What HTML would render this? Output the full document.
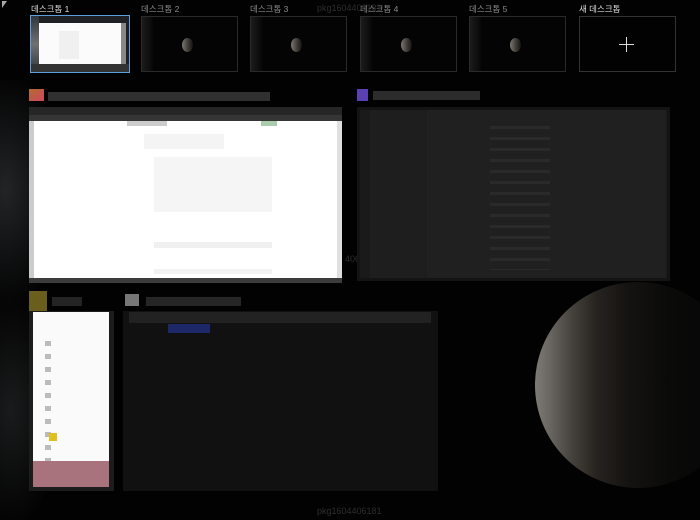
<!DOCTYPE html>
<html><head><meta charset="utf-8"><style>
*{margin:0;padding:0;box-sizing:border-box}
body{width:700px;height:520px;background:#020202;position:relative;overflow:hidden;font-family:"Liberation Sans","Noto Sans CJK KR",sans-serif}
.a{position:absolute}
.lbl{position:absolute;top:3px;font-size:8.5px;color:#8a8a8a}
.th{position:absolute;top:16px;width:97px;height:56px;border:1px solid #2a2a2a;background:#040404;overflow:hidden}
.th .e{position:absolute;left:0;top:0;width:12px;height:56px;background:linear-gradient(90deg,#1c1c1c,#0c0c0c 70%,#040404)}
.th .m{position:absolute;left:40px;top:21px;width:11px;height:14px;border-radius:50%;background:linear-gradient(90deg,#7a7672,#44403c 50%,#141210)}
.wm{position:absolute;font-size:9px;color:#2e2e2e}
.ttl{position:absolute;height:9px;background:#333}
</style></head><body>
<div class="a" style="left:0;top:80px;width:110px;height:440px;background:radial-gradient(ellipse 60px 120px at 5% 25%,#222426,transparent),radial-gradient(ellipse 50px 120px at 10% 75%,#1a1b1c,transparent)"></div>
<div class="a" style="left:535px;top:282px;width:206px;height:206px;border-radius:50%;background:linear-gradient(90deg,#7e7b77 0%,#67635e 8%,#45413d 18%,#26231f 30%,#151311 45%,#0a0a09 65%,#050505 100%)"></div>
<div class="a" style="left:2px;top:1px;width:0;height:0;border-left:5px solid #aaa;border-bottom:7px solid transparent"></div>
<span class="lbl" style="left:31px;color:#ddd">데스크톱 1</span>
<span class="lbl" style="left:141px">데스크톱 2</span>
<span class="lbl" style="left:250px">데스크톱 3</span>
<span class="lbl" style="left:360px">데스크톱 4</span>
<span class="lbl" style="left:469px">데스크톱 5</span>
<span class="lbl" style="left:579px;color:#ddd">새 데스크톱</span>
<span class="wm" style="left:317px;top:3px">pkg1604406181</span>
<div class="a" style="left:30px;top:15px;width:100px;height:58px;border:1px solid #5d9fdc;background:#1d2124">
 <div class="a" style="left:0;top:0;width:8px;height:56px;background:linear-gradient(#30363a,#707070,#30363a)"></div>
 <div class="a" style="left:8px;top:7px;width:82px;height:41px;background:#fbfbfb"></div>
 <div class="a" style="left:28px;top:15px;width:20px;height:28px;background:#f0f0f0"></div>
 <div class="a" style="left:90px;top:7px;width:5px;height:41px;background:#888"></div>
 <div class="a" style="left:0;top:48px;width:98px;height:8px;background:#333"></div>
</div>
<div class="th" style="left:141px"><div class="e"></div><div class="m"></div></div>
<div class="th" style="left:250px"><div class="e"></div><div class="m"></div></div>
<div class="th" style="left:360px"><div class="e"></div><div class="m"></div></div>
<div class="th" style="left:469px"><div class="e"></div><div class="m"></div></div>
<div class="a" style="left:579px;top:16px;width:97px;height:56px;border:1px solid #333"></div>
<div class="a" style="left:619px;top:44px;width:15px;height:1px;background:#ddd"></div>
<div class="a" style="left:626px;top:37px;width:1px;height:15px;background:#ddd"></div>

<div class="a" style="left:29px;top:89px;width:15px;height:12px;background:linear-gradient(135deg,#b06a30,#d04860)"></div>
<div class="ttl" style="left:48px;top:92px;width:222px;background:#303030"></div>
<div class="a" style="left:29px;top:107px;width:313px;height:176px;background:#262626">
 <div class="a" style="left:0;top:8px;width:313px;height:6px;background:#353535"></div>
 <div class="a" style="left:0;top:14px;width:313px;height:157px;background:#fff;border-left:5px solid #ccc;border-right:5px solid #e0e0e0"></div>
 <div class="a" style="left:98px;top:14px;width:40px;height:5px;background:#ccc"></div>
 <div class="a" style="left:232px;top:14px;width:16px;height:5px;background:#aca"></div>
 <div class="a" style="left:115px;top:27px;width:80px;height:15px;background:#f4f4f4"></div>
 <div class="a" style="left:125px;top:50px;width:118px;height:55px;background:#f5f5f5"></div>
 <div class="a" style="left:125px;top:135px;width:118px;height:6px;background:#f0f0f0"></div>
 <div class="a" style="left:125px;top:162px;width:118px;height:5px;background:#f2f2f2"></div>
 <div class="a" style="left:0;top:171px;width:313px;height:5px;background:#3c3c3c"></div>
</div>
<span class="wm" style="left:345px;top:254px">406181</span>

<div class="a" style="left:357px;top:89px;width:11px;height:12px;background:#5a40b0"></div>
<div class="ttl" style="left:373px;top:91px;width:107px;background:#2c2c2c"></div>
<div class="a" style="left:357px;top:107px;width:313px;height:174px;background:#1a1a1a;border:3px solid #141414">
 <div class="a" style="left:10px;top:0;width:55px;height:168px;background:#1e1e1e"></div>
 <div class="a" style="left:66px;top:0;width:240px;height:168px;background:#202020"></div>
 <div class="a" style="left:130px;top:10px;width:60px;height:150px;background:repeating-linear-gradient(#202020 0 6px,#2a2a2a 6px 9px,#202020 9px 11px)"></div>
</div>

<div class="a" style="left:29px;top:291px;width:18px;height:20px;background:#6a5e1c"></div>
<div class="ttl" style="left:52px;top:297px;width:30px;background:#242424"></div>
<div class="a" style="left:29px;top:311px;width:85px;height:180px;background:#1c1c1c">
 <div class="a" style="left:4px;top:1px;width:76px;height:175px;background:#fafafa"></div>
 <div class="a" style="left:16px;top:30px;width:6px;height:130px;background:repeating-linear-gradient(#bbb 0 5px,#fafafa 5px 13px)"></div>
 <div class="a" style="left:4px;top:150px;width:76px;height:26px;background:#a8737c"></div>
 <div class="a" style="left:20px;top:122px;width:8px;height:8px;background:#e0c020"></div>
</div>

<div class="a" style="left:125px;top:294px;width:14px;height:12px;background:#777"></div>
<div class="ttl" style="left:146px;top:297px;width:95px;background:#262626"></div>
<div class="a" style="left:123px;top:311px;width:315px;height:180px;background:#111">
 <div class="a" style="left:6px;top:1px;width:302px;height:11px;background:#222"></div>
 <div class="a" style="left:45px;top:13px;width:42px;height:9px;background:#1c2868"></div>
</div>
<span class="wm" style="left:317px;top:506px">pkg1604406181</span>
</body></html>
